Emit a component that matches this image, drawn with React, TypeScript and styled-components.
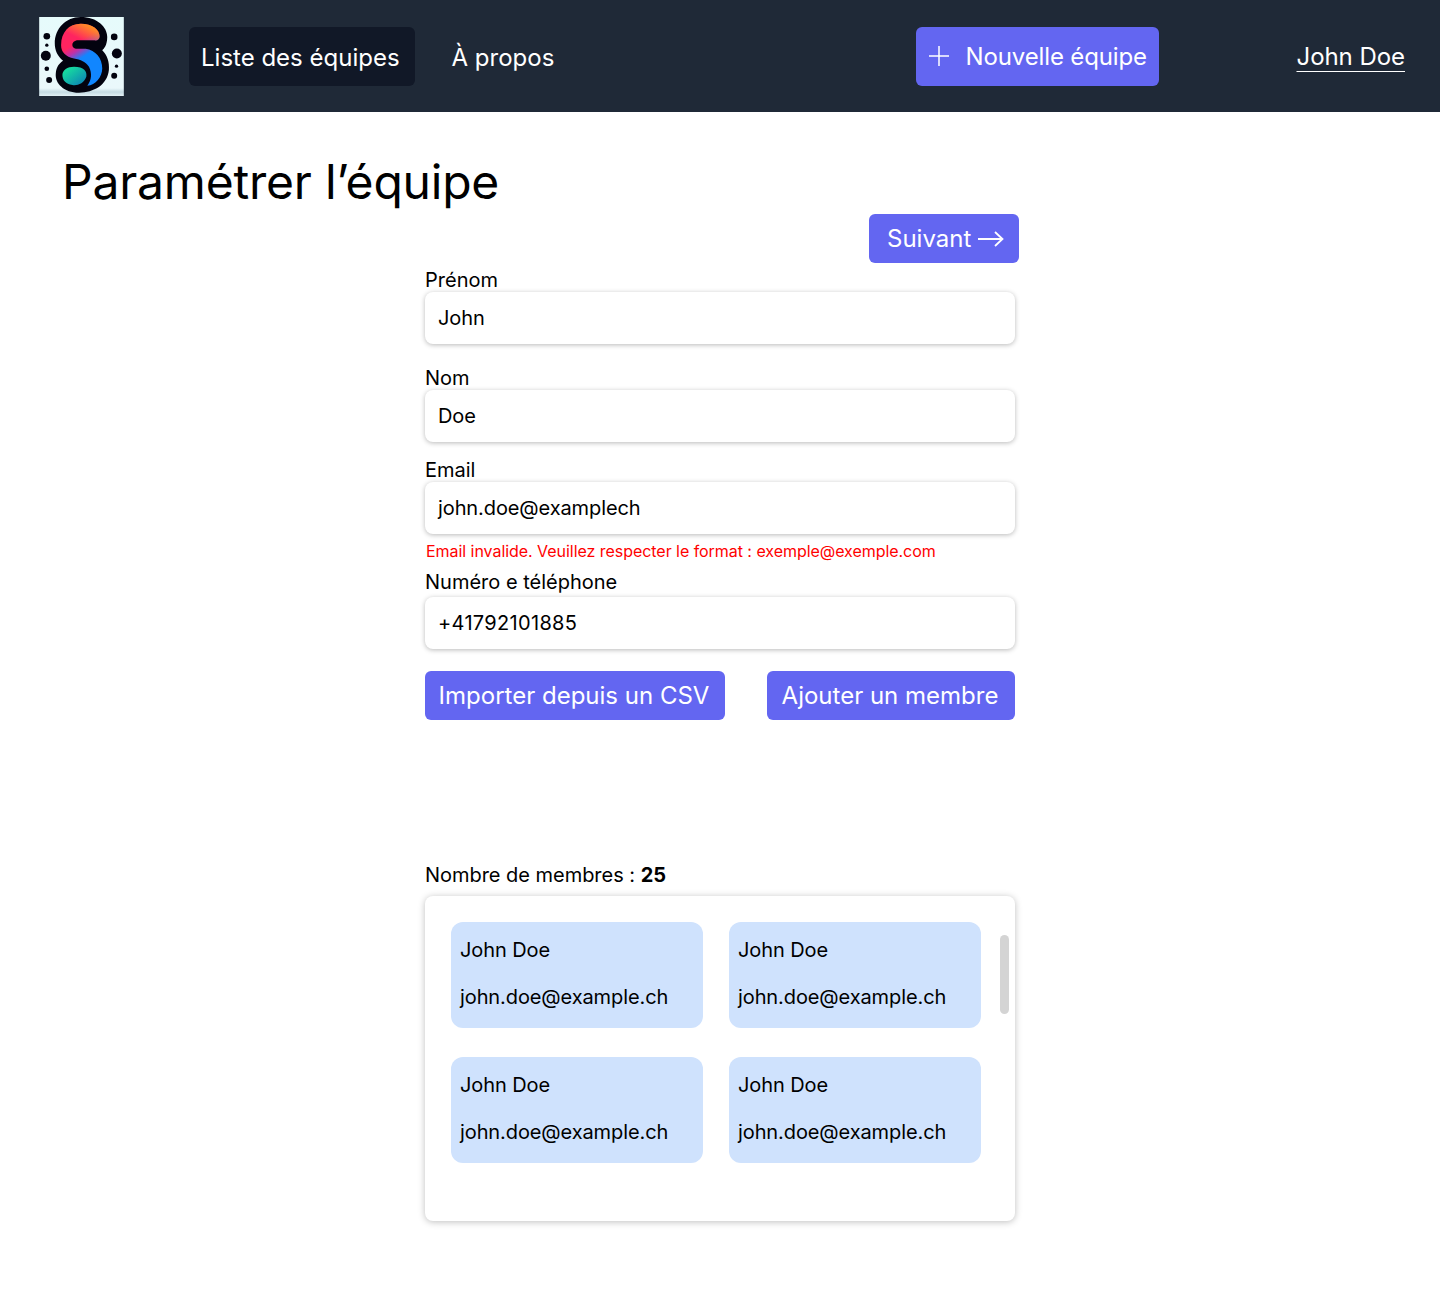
import styled, { createGlobalStyle } from "styled-components";

const GlobalStyle = createGlobalStyle`
  html, body {
    margin: 0;
    padding: 0;
    background: #fff;
    color: #000;
    font-family: Inter, "Liberation Sans", sans-serif;
  }
  * {
    box-sizing: border-box;
  }
`;

const Header = styled.header`
  height: 112px;
  background-color: #1f2937;
  display: flex;
  align-items: center;
  padding: 0 35px 0 39px;
`;

const LogoBox = styled.div`
  width: 85px;
  height: 79px;
  margin-right: 65px;
  display: flex;
`;

const Nav = styled.nav`
  display: flex;
  align-items: center;
  gap: 25px;
`;

const NavLink = styled.a<{ $active?: boolean }>`
  height: 59px;
  display: flex;
  align-items: center;
  padding: 2px 15px 0 12px;
  border-radius: 6px;
  font-size: 24px;
  color: #fff;
  background-color: ${(props) => (props.$active ? "#111827" : "transparent")};
`;

const NewTeamButton = styled.button`
  height: 59px;
  width: 243px;
  margin-left: auto;
  margin-right: 137px;
  display: flex;
  align-items: center;
  gap: 14px;
  padding: 0 0 0 11px;
  border: none;
  border-radius: 6px;
  background-color: #6366f1;
  color: #fff;
  font-family: inherit;
  font-size: 24px;
  letter-spacing: -0.13px;
`;

const UserLink = styled.a`
  font-size: 24px;
  letter-spacing: -0.05px;
  color: #fff;
  text-decoration: underline;
  text-underline-offset: 6px;
  text-decoration-thickness: 1px;
`;

const Main = styled.main`
  padding-top: 41px;
  height: 1197px;
`;

const Title = styled.h1`
  margin: 0 0 0 62px;
  font-size: 48px;
  line-height: 58px;
  font-weight: 400;
  letter-spacing: -0.21px;
`;

const Form = styled.div`
  width: 590px;
  margin: 3px auto 0;
  display: flex;
  flex-direction: column;
`;

const PrimaryButton = styled.button`
  height: 49px;
  border: none;
  border-radius: 6px;
  background-color: #6366f1;
  color: #fff;
  font-family: inherit;
  font-size: 24px;
  padding: 0 2px 0 0;
`;

const NextButton = styled(PrimaryButton)`
  width: 150px;
  align-self: flex-end;
  margin-right: -4px;
  margin-bottom: 7px;
  display: flex;
  align-items: center;
  padding-left: 18px;
  gap: 7px;
`;

const Field = styled.div<{ $bottom: number }>`
  display: flex;
  flex-direction: column;
  margin-bottom: ${(props) => props.$bottom}px;
`;

const Label = styled.label<{ $gap?: number }>`
  font-size: 20px;
  line-height: 20px;
  height: 22px;
  margin-bottom: ${(props) => props.$gap ?? 0}px;
`;

const Input = styled.div<{ $spacing?: number }>`
  height: 52px;
  display: flex;
  align-items: center;
  padding: 0 13px;
  font-size: 20px;
  letter-spacing: ${(props) => props.$spacing ?? -0.1}px;
  background: #fff;
  border-radius: 8px;
  box-shadow: 0 1px 5px rgba(0, 0, 0, 0.28);
`;

const ErrorText = styled.div`
  margin: 7px 0 0 1px;
  height: 31px;
  font-size: 16px;
  line-height: 20px;
  letter-spacing: -0.045px;
  color: #ff0000;
`;

const Actions = styled.div`
  display: flex;
  justify-content: space-between;
  margin-top: 22px;
`;

const CsvButton = styled(PrimaryButton)`
  width: 300px;
`;

const AddButton = styled(PrimaryButton)`
  width: 248px;
`;

const MemberCount = styled.div`
  margin-top: 143px;
  font-size: 20px;
  line-height: 24px;
  margin-bottom: 9px;
  letter-spacing: -0.03px;

  b {
    font-weight: 700;
  }
`;

const MemberPanel = styled.div`
  position: relative;
  height: 325px;
  padding: 26px;
  background: #fff;
  border-radius: 8px;
  box-shadow: 0 1px 7px rgba(0, 0, 0, 0.26);
`;

const MemberGrid = styled.div`
  display: grid;
  grid-template-columns: 252px 252px;
  column-gap: 26px;
  row-gap: 29px;
`;

const MemberCard = styled.div`
  height: 106px;
  padding: 16px 9px 0;
  background-color: #cfe2fd;
  border-radius: 12px;
  font-size: 20px;
  line-height: 24px;
  letter-spacing: -0.1px;
  display: flex;
  flex-direction: column;
  gap: 23px;
`;

const ScrollThumb = styled.div`
  position: absolute;
  top: 39px;
  right: 6px;
  width: 9px;
  height: 79px;
  border-radius: 5px;
  background-color: #d4d4d4;
`;

const dots = [
  [23, 58, 10],
  [23, 85, 5],
  [20, 117, 15],
  [23, 156, 7],
  [30, 190, 9],
  [226, 60, 10],
  [234, 110, 15],
  [233, 148, 5],
  [226, 177, 9],
];

const sPath =
  "M66 85C66 45 90 20 125 20C160 20 182 38 182 58C182 68 175 72 165 70L118 70C105 70 100 78 100 84C100 92 108 96 118 96L140 96C170 100 190 125 190 155C190 180 170 205 145 207C158 190 160 170 150 150C140 135 125 128 105 125C80 120 66 105 66 85Z";

function Logo() {
  return (
    <svg width="85" height="79" viewBox="0 0 255 238">
      <defs>
        <linearGradient id="bg" x1="0" y1="0" x2="0" y2="1">
          <stop offset="0" stopColor="#e6fbfb" />
          <stop offset="0.9" stopColor="#eaf8fb" />
          <stop offset="0.95" stopColor="#c5dbe3" />
          <stop offset="1" stopColor="#e3f1f5" />
        </linearGradient>
        <linearGradient id="body" gradientUnits="userSpaceOnUse" x1="100" y1="85" x2="125" y2="125">
          <stop offset="0" stopColor="#ff2460" />
          <stop offset="0.45" stopColor="#c030a8" />
          <stop offset="1" stopColor="#1186ff" />
        </linearGradient>
        <linearGradient id="glow" gradientUnits="userSpaceOnUse" x1="150" y1="18" x2="125" y2="68">
          <stop offset="0" stopColor="#ff9d1c" />
          <stop offset="1" stopColor="#ff9d1c" stopOpacity="0" />
        </linearGradient>
        <linearGradient id="blob" x1="0" y1="0" x2="1" y2="1">
          <stop offset="0.2" stopColor="#16d8a0" />
          <stop offset="1" stopColor="#0b78b8" />
        </linearGradient>
      </defs>
      <rect width="255" height="238" fill="url(#bg)" />
      {dots.map(([cx, cy, r]) => (
        <circle key={`${cx}-${cy}`} cx={cx} cy={cy} r={r} fill="#03030f" />
      ))}
      <path
        d="M125 0C175 0 205 30 205 60C205 85 195 95 190 100C205 115 212 135 210 160C205 205 165 228 120 228C75 228 47 200 50 170C52 150 60 140 72 132C55 118 47 100 47 80C47 35 80 0 125 0Z"
        fill="#03030f"
      />
      <path d={sPath} fill="url(#body)" />
      <path d={sPath} fill="url(#glow)" />
      <path
        d="M70 175C70 160 85 150 105 150C135 150 145 165 142 180C135 200 115 208 100 205C80 203 70 190 70 175Z"
        fill="url(#blob)"
      />
    </svg>
  );
}

function App() {
  return (
    <>
      <GlobalStyle />
      <Header>
        <LogoBox>
          <Logo />
        </LogoBox>
        <Nav>
          <NavLink $active>Liste des équipes</NavLink>
          <NavLink>À propos</NavLink>
        </Nav>
        <NewTeamButton>
          <svg width="24" height="24" viewBox="0 0 24 24" fill="none" stroke="#fff" strokeWidth="1.5">
            <path d="M12 2V22M2 12H22" />
          </svg>
          Nouvelle équipe
        </NewTeamButton>
        <UserLink>John Doe</UserLink>
      </Header>
      <Main>
        <Title>Paramétrer l’équipe</Title>
        <Form>
          <NextButton>
            Suivant
            <svg width="26" height="20" viewBox="0 0 26 20" fill="none" stroke="#fff" strokeWidth="1.8">
              <path d="M0 10H24M17 3L24.5 10L17 17" />
            </svg>
          </NextButton>
          <Field $bottom={24}>
            <Label>Prénom</Label>
            <Input>John</Input>
          </Field>
          <Field $bottom={18}>
            <Label>Nom</Label>
            <Input>Doe</Input>
          </Field>
          <Field $bottom={0}>
            <Label>Email</Label>
            <Input>john.doe@examplech</Input>
            <ErrorText>Email invalide. Veuillez respecter le format : exemple@exemple.com</ErrorText>
          </Field>
          <Field $bottom={0}>
            <Label $gap={3}>Numéro e téléphone</Label>
            <Input $spacing={0.32}>+41792101885</Input>
          </Field>
          <Actions>
            <CsvButton>Importer depuis un CSV</CsvButton>
            <AddButton>Ajouter un membre</AddButton>
          </Actions>
          <MemberCount>
            Nombre de membres : <b>25</b>
          </MemberCount>
          <MemberPanel>
            <MemberGrid>
              {[0, 1, 2, 3].map((i) => (
                <MemberCard key={i}>
                  <span>John Doe</span>
                  <span>john.doe@example.ch</span>
                </MemberCard>
              ))}
            </MemberGrid>
            <ScrollThumb />
          </MemberPanel>
        </Form>
      </Main>
    </>
  );
}

export default App;
